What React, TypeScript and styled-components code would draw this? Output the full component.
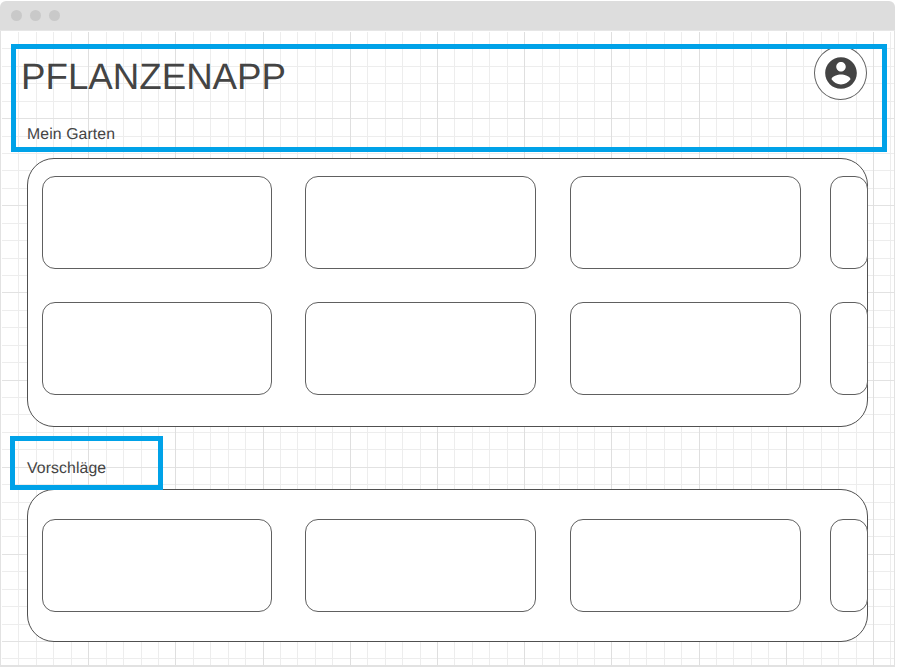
import React from 'react';
import styled, { createGlobalStyle, css } from 'styled-components';

const ink = '#444444';
const accent = '#00a2e8';

const GlobalStyle = createGlobalStyle`
  *, *::before, *::after { box-sizing: border-box; }
  html, body { margin: 0; padding: 0; background: #ffffff; }
  body {
    font-family: "Liberation Sans", Arial, sans-serif;
    color: ${ink};
    overflow: hidden;
    text-rendering: geometricPrecision;
  }
`;

const Window = styled.div`
  display: flex;
  flex-direction: column;
  width: 895px;
  height: 666px;
  margin-top: 1px;
  border-radius: 6px 6px 0 0;
  overflow: hidden;
`;

const TitleBar = styled.div`
  flex: none;
  display: flex;
  align-items: center;
  gap: 8px;
  height: 30px;
  padding: 0 0 0 11px;
  background: #dddddd;
  border-bottom: 1px solid #e6e6e6;
`;

const Dot = styled.span`
  width: 11px;
  height: 11px;
  border-radius: 50%;
  background: #c9c9c9;
`;

const gridLines = (angle: string, color: string, step: number) =>
  css`repeating-linear-gradient(${angle}, ${color} 0 1px, transparent 1px ${step}px)`;

const Canvas = styled.main`
  flex: 1;
  display: flex;
  flex-direction: column;
  align-items: flex-start;
  padding: 13px 0 0 10px;
  border: solid #e2e2e2;
  border-width: 0 1px 2px;
  box-shadow: inset 1px 1px 0 #ffffff;
  background:
    ${gridLines('90deg', '#dfdfdf', 87.2)},
    ${gridLines('180deg', '#e2e2e2', 87.15)},
    ${gridLines('90deg', '#ededed', 17.44)},
    ${gridLines('180deg', '#ededed', 17.43)},
    #ffffff;
`;

const Header = styled.header`
  position: relative;
  z-index: 1;
  display: flex;
  justify-content: space-between;
  width: 876px;
  height: 108px;
  border: 5px solid ${accent};
`;

const Headings = styled.div`
  display: flex;
  flex-direction: column;
  padding: 7px 0 0 5px;
`;

const Title = styled.h1`
  margin: 0;
  font-size: 36.7px;
  line-height: 42px;
  font-weight: 400;
`;

const SectionTitle = styled.h2`
  margin: 0;
  font-size: 15.8px;
  letter-spacing: 0.1px;
  line-height: 18px;
  font-weight: 400;
`;

const GardenTitle = styled(SectionTitle)`
  margin: 28px 0 0 6px;
`;

const Avatar = styled.button`
  display: flex;
  align-items: center;
  justify-content: center;
  flex: none;
  width: 53px;
  height: 54px;
  margin: -3px 15px 0 0;
  padding: 0;
  border: 1px solid #606060;
  border-radius: 50%;
  background: #ffffff;
  clip-path: inset(3px 0 0 0);
`;

const Suggestions = styled.div`
  position: relative;
  z-index: 1;
  width: 153px;
  height: 54px;
  margin: 9px 0 -1px -1px;
  padding: 19px 0 0 12px;
  border: 5px solid ${accent};
`;

const Panel = styled.section<{ $height: number; $top: number; $padTop: number }>`
  display: grid;
  grid-template-columns: 230px 231px 231px 38px;
  grid-auto-rows: 93px;
  column-gap: 33px;
  row-gap: 33px;
  align-content: start;
  width: 841px;
  height: ${(p) => p.$height}px;
  margin: ${(p) => p.$top}px 0 0 16px;
  padding: ${(p) => p.$padTop}px 0 0 14px;
  border: 1px solid #505050;
  border-radius: 27px;
  background: #ffffff;
`;

const Card = styled.article<{ $column: number }>`
  border: 1px solid #606060;
  border-radius: 13px;
  background: #ffffff;
  ${(p) => p.$column === 3 && css`margin-left: 1px; margin-right: -1px;`}
  ${(p) => p.$column === 4 && css`margin-left: -3px; width: 38px;`}
`;

const columns = [1, 2, 3, 4];

const CardRow = () => (
  <>
    {columns.map((column) => (
      <Card key={column} $column={column} />
    ))}
  </>
);

const AccountIcon = () => (
  <svg width="38" height="38" viewBox="0 0 24 24" fill={ink} aria-hidden="true">
    <path d="M12 2C6.48 2 2 6.48 2 12s4.48 10 10 10 10-4.48 10-10S17.52 2 12 2zm0 3c1.66 0 3 1.34 3 3s-1.34 3-3 3-3-1.34-3-3 1.34-3 3-3zm0 14.2c-2.5 0-4.71-1.28-6-3.22.03-1.99 4-3.08 6-3.08 1.99 0 5.97 1.09 6 3.08-1.29 1.94-3.5 3.22-6 3.22z" />
  </svg>
);

export default function App() {
  return (
    <>
      <GlobalStyle />
      <Window>
        <TitleBar>
          <Dot />
          <Dot />
          <Dot />
        </TitleBar>
        <Canvas>
          <Header>
            <Headings>
              <Title>PFLANZENAPP</Title>
              <GardenTitle>Mein Garten</GardenTitle>
            </Headings>
            <Avatar aria-label="Profil">
              <AccountIcon />
            </Avatar>
          </Header>
          <Panel $height={269} $top={6} $padTop={17}>
            <CardRow />
            <CardRow />
          </Panel>
          <Suggestions>
            <SectionTitle>Vorschläge</SectionTitle>
          </Suggestions>
          <Panel $height={153} $top={0} $padTop={29}>
            <CardRow />
          </Panel>
        </Canvas>
      </Window>
    </>
  );
}
